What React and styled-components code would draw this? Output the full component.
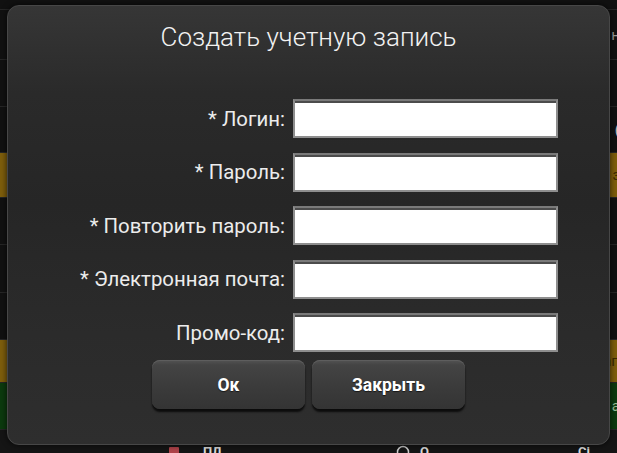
import React from 'react';
import styled, { createGlobalStyle } from 'styled-components';

const Global = createGlobalStyle`
html, body {
  margin: 0;
  padding: 0;
  background: #0f0f0f;
  font-family: Roboto, "Liberation Sans", sans-serif;
}
`

const Page = styled.div`
position: relative;
width: 617px;
height: 453px;
overflow: hidden;
background: #0f0f0f;
display: flex;
flex-direction: column;
`
const Row = styled.div`
height: ${p => p.h}px;
flex: none;
box-sizing: border-box;
border-bottom: 1px solid #262626;
background: ${p => p.bg || '#111111'};
display: flex;
align-items: center;
justify-content: flex-end;
color: ${p => p.fg || '#bdbdbd'};
font-size: 15px;
`
const EdgeText = styled.span`
margin-right: -3px;
white-space: nowrap;
`
const BottomStrip = styled.div`
flex: 1;
position: relative;
background: #151515;
color: #dcdcdc;
font-size: 13px;
font-weight: 700;
`
const BottomItem = styled.span`
position: absolute;
left: ${p => p.x}px;
top: 15px;
display: flex;
align-items: center;
line-height: 14px;
`

const Dialog = styled.div`
position: absolute;
left: 7px;
top: 5px;
width: 603px;
height: 440px;
box-sizing: border-box;
border: 1px solid #474747;
border-radius: 12px;
background: linear-gradient(180deg, #363636 0%, #2a2a2a 20%, #262626 45%, #2b2b2b 75%, #2e2e2e 100%);
box-shadow: 0 0 6px rgba(0,0,0,0.7);
display: flex;
flex-direction: column;
align-items: center;
padding-top: 16px;
`
const Title = styled.h1`
margin: 0;
font-family: Roboto, "Liberation Sans", sans-serif;
font-weight: 300;
font-size: 26px;
line-height: 30px;
color: #f2f2f2;
`
const Form = styled.div`
align-self: flex-start;
margin-top: 47px;
display: grid;
grid-template-columns: 277px 265px;
grid-auto-rows: 39px;
column-gap: 8px;
row-gap: 14.5px;
`
const Label = styled.label`
display: flex;
align-items: center;
justify-content: flex-end;
font-size: 20.4px;
color: #ececec;
white-space: nowrap;
`
const Input = styled.input`
box-sizing: border-box;
width: 100%;
height: 100%;
margin: 0;
background: #ffffff;
border: 2px solid #8e8e8e;
border-top-color: #7a7a7a;
box-shadow: inset 0 2px 0 #4c4c4c;
outline: none;
padding: 0 6px;
font-size: 16px;
`
const Buttons = styled.div`
margin-top: 8px;
display: flex;
gap: 7px;
`
const Button = styled.button`
width: 153px;
height: 49px;
border: none;
border-radius: 8px;
background: linear-gradient(180deg, #545454 0%, #444444 10%, #3b3b3b 55%, #343434 100%);
box-shadow: 0 3px 2px rgba(0,0,0,0.75), inset 0 1px 0 #5e5e5e;
color: #ffffff;
font-family: Roboto, "Liberation Sans", sans-serif;
font-weight: 700;
font-size: 17.5px;
text-shadow: 0 1px 1px rgba(0,0,0,0.6);
cursor: pointer;
`

const rows = [
  { h: 10 },
  { h: 50, text: 'н', fg: '#9a9a9a' },
  { h: 47 },
  { h: 46, text: '(', fg: '#bdbdbd' },
  { h: 45, bg: '#7e5e0c', text: 'з', fg: '#3a2a00' },
  { h: 47 },
  { h: 48 },
  { h: 47 },
  { h: 43, bg: '#7e5e0c', text: 'ап', fg: '#3a2a00' },
  { h: 47, bg: '#0c3a0e', text: 'а', fg: '#9ac09a' },
]

const fields = [
  { label: '* Логин:', type: 'text' },
  { label: '* Пароль:', type: 'password' },
  { label: '* Повторить пароль:', type: 'password' },
  { label: '* Электронная почта:', type: 'email' },
  { label: 'Промо-код:', type: 'text' },
]

export default function App() {
  return (
    <>
      <Global />
      <Page>
        {rows.map((r, i) => (
          <Row key={i} h={r.h} bg={r.bg} fg={r.fg}>
            {r.text && <EdgeText>{r.text}</EdgeText>}
          </Row>
        ))}
        <BottomStrip>
          <BottomItem x={168}>
            <svg width="12" height="12" viewBox="0 0 12 12">
              <rect x="1" y="2" width="10" height="9" rx="1" fill="#b0434a" />
            </svg>
          </BottomItem>
          <BottomItem x={203}>ПЛ</BottomItem>
          <BottomItem x={396}>
            <svg width="14" height="14" viewBox="0 0 14 14">
              <circle cx="7" cy="7" r="5.5" fill="none" stroke="#cfcfcf" strokeWidth="1.5" />
            </svg>
          </BottomItem>
          <BottomItem x={420}>О</BottomItem>
          <BottomItem x={578}>Сі</BottomItem>
        </BottomStrip>

        <Dialog>
          <Title>Создать учетную запись</Title>
          <Form>
            {fields.map((f, i) => (
              <React.Fragment key={i}>
                <Label>{f.label}</Label>
                <Input type={f.type} />
              </React.Fragment>
            ))}
          </Form>
          <Buttons>
            <Button>Ок</Button>
            <Button>Закрыть</Button>
          </Buttons>
        </Dialog>
      </Page>
    </>
  )
}
